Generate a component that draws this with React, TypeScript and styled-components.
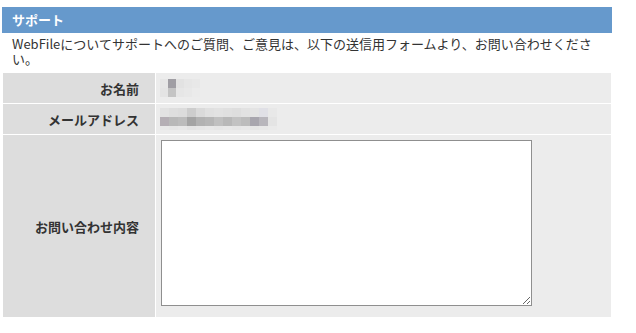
import styled, { createGlobalStyle } from "styled-components"

const GlobalStyle = createGlobalStyle`
body {
    margin: 0;
    background: #ffffff;
    font-family: "Noto Sans CJK JP", "Liberation Sans", sans-serif;
    color: #333333;
}
`

const Page = styled.div`
width: 610px;
margin-left: 2px;
padding-top: 7px;
`

const Heading = styled.h2`
margin: 0;
height: 26px;
line-height: 26px;
padding-left: 10px;
background: #6699cc;
color: #ffffff;
font-size: 13px;
font-weight: bold;
`

const Lead = styled.p`
margin: 0;
padding: 3px 10px 7px;
font-size: 13px;
line-height: 15px;
color: #333333;
`

const FormGrid = styled.div`
margin: 0 1px;
display: grid;
grid-template-columns: 152px 1fr;
grid-template-rows: 30px 30px 182px;
gap: 1px;
background: #ffffff;
`

const Label = styled.div`
background: #dddddd;
display: flex;
align-items: center;
justify-content: flex-end;
padding-right: 16px;
font-size: 13px;
font-weight: bold;
color: #333333;
`

const Value = styled.div`
background: #ececec;
display: flex;
align-items: center;
padding-left: 4px;
`

const TextValue = styled(Value)`
align-items: flex-start;
padding: 5px 0 0 5px;
`

const Mosaic = styled.svg`
display: block;
filter: blur(0.6px);
`

const Message = styled.textarea`
display: block;
box-sizing: border-box;
width: 371px;
height: 166px;
margin: 0;
border: 1px solid #8f8f8f;
background: #ffffff;
font-family: inherit;
font-size: 13px;
`

// pixelated (masked) personal data, one grey per block
const nameBlocks = [
    ["#e6e6e6", "#a09ea4", "#e2e2e2", "#e6e6e6", "#e8e8e8"],
    ["#e4e4e4", "#c4c4c4", "#e6e6e6", "#e8e8e8", "#ebebeb"],
]

const mailBlocks = [
    ["#e2e2e2", "#dedede", "#dcdcdc", "#cdcdcd", "#dadada", "#e0e0e0", "#e2e2e2", "#e0e0e0", "#dedede", "#e2e2e2", "#e4e4e4", "#e0e0e6", "#e8e8e8"],
    ["#b4aeb4", "#b8b8b8", "#bcbcbc", "#a4a4a4", "#b2b2b2", "#b6b6b6", "#c0c0c0", "#b8b8b8", "#c2c2c2", "#bcbcbc", "#a8a6ae", "#b8b6bc", "#e4e4e4"],
    ["#e8e8e8", "#e6e6e6", "#e8e8e8", "#e4e4e4", "#e6e6e6", "#e8e8e8", "#e6e6e6", "#e8e8e8", "#e6e6e6", "#e8e8e8", "#e6e6e6", "#e8e8e8", "#eaeaea"],
]

const MaskedValue: React.FC<{ blocks: string[][], cell: number, rowHeights: number[] }> = ({ blocks, cell, rowHeights }) => {
    const width = blocks[0].length * cell
    const height = rowHeights.reduce((a, b) => a + b, 0)
    let y = 0
    return (
        <Mosaic width={width} height={height} shapeRendering="crispEdges">
            {blocks.map((row, r) => {
                const top = y
                y += rowHeights[r]
                return row.map((c, i) => (
                    <rect key={r + "-" + i} x={i * cell} y={top} width={cell} height={rowHeights[r]} fill={c} />
                ))
            })}
        </Mosaic>
    )
}

export default function App() {
    return (
        <Page>
            <GlobalStyle />
            <Heading>サポート</Heading>
            <Lead>
                WebFileについてサポートへのご質問、ご意見は、以下の送信用フォームより、お問い合わせください。
            </Lead>
            <FormGrid>
                <Label>お名前</Label>
                <Value>
                    <MaskedValue blocks={nameBlocks} cell={8} rowHeights={[9, 9]} />
                </Value>
                <Label>メールアドレス</Label>
                <Value>
                    <MaskedValue blocks={mailBlocks} cell={9} rowHeights={[9, 9, 4]} />
                </Value>
                <Label>お問い合わせ内容</Label>
                <TextValue>
                    <Message />
                </TextValue>
            </FormGrid>
        </Page>
    )
}
